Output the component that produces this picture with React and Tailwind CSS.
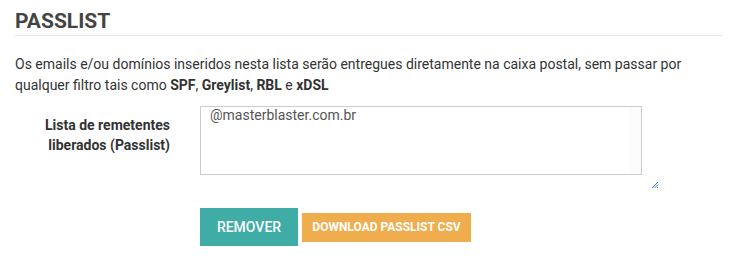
export default function App() {
  return (
    <div className="w-[738px] h-[261px] bg-white px-[15px] font-['Roboto',sans-serif] text-[#333]">
      <h2 className="pt-[10px] pb-[3px] border-b border-[#e5e5e5] text-[21px] leading-[22px] font-bold text-[#444]">
        PASSLIST
      </h2>

      <p className="mt-[18px] text-[14px] leading-[21px] text-[#333]">
        Os emails e/ou domínios inseridos nesta lista serão entregues diretamente na caixa postal, sem passar por
        qualquer filtro tais como <b>SPF</b>, <b>Greylist</b>, <b>RBL</b> e <b>xDSL</b>
      </p>

      <div className="mt-[10px] flex">
        <label className="w-[170px] shrink-0 pr-[15px] pt-[9px] text-right text-[14px] leading-[20px] font-bold text-[#333]">
          Lista de remetentes liberados (Passlist)
        </label>
        <div className="relative pl-[15px]">
          <div className="flex w-[442px] h-[69px] border border-[#cccccc] bg-white">
            <textarea
              defaultValue="@masterblaster.com.br"
              className="flex-1 resize-none outline-none px-[9px] pt-0 text-[14px] leading-[17px] text-[#555]"
            />
            <div className="w-[12px] bg-[#fcfcfc]" />
          </div>
          <svg className="absolute left-[466px] top-[75px]" width="8" height="8" viewBox="0 0 8 8">
            <path d="M7 1L1 7M7 3.5L3.5 7M7 6L6 7" stroke="#3b82d6" strokeWidth="1" />
          </svg>
        </div>
      </div>

      <div className="mt-[33px] ml-[185px] flex items-center gap-[4px]">
        <button className="w-[98px] h-[38px] bg-[#40aca6] text-white text-[14px] font-medium">
          REMOVER
        </button>
        <button className="w-[169px] h-[29px] bg-[#f0ad4e] text-white text-[12px] font-bold">
          DOWNLOAD PASSLIST CSV
        </button>
      </div>
    </div>
  );
}
